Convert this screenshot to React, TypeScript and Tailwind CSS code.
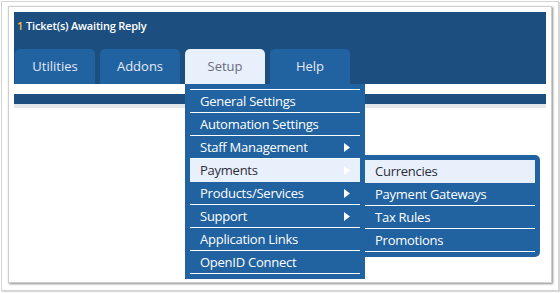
import React from "react";

const menuItems: { label: string; arrow?: boolean; active?: boolean }[] = [
  { label: "General Settings" },
  { label: "Automation Settings" },
  { label: "Staff Management", arrow: true },
  { label: "Payments", arrow: true, active: true },
  { label: "Products/Services", arrow: true },
  { label: "Support", arrow: true },
  { label: "Application Links" },
  { label: "OpenID Connect" },
];

const subItems: { label: string; active?: boolean }[] = [
  { label: "Currencies", active: true },
  { label: "Payment Gateways" },
  { label: "Tax Rules" },
  { label: "Promotions" },
];

const tabs = ["Utilities", "Addons", "Setup", "Help"];

function Arrow() {
  return (
    <svg width="6" height="9" viewBox="0 0 6 9" className="shrink-0">
      <polygon points="0,0 6,4.5 0,9" fill="#ffffff" />
    </svg>
  );
}

export default function App() {
  return (
    <div
      className="relative w-[560px] h-[293px] bg-white overflow-hidden"
      style={{ fontFamily: '"Open Sans", "Noto Sans", sans-serif' }}
    >
      <div className="absolute left-[1px] top-[1px] w-[558px] h-[290px] border border-[#d4d4d4] shadow-[1px_1px_1px_rgba(0,0,0,0.15)]" />
      <div className="absolute left-[8px] top-[6px] w-[544px] h-[277px] border border-[#cfcfcf] bg-white shadow-[1px_1px_2px_rgba(0,0,0,0.45)] p-[5px]">
        {/* header */}
        <div className="bg-[#1c4f80] h-[72px] flex flex-col">
          <div className="h-[29px] flex items-center pl-[3px] text-[11px] font-semibold tracking-[-0.2px] text-white">
            <span className="text-[#f3c33e] mr-[3px]">1</span>
            <span>Ticket(s) Awaiting Reply</span>
          </div>
          <div className="flex gap-[5px] pl-[1px] h-[35px] mt-[8px]">
            {tabs.map((t) => (
              <div
                key={t}
                className={
                  t === "Setup"
                    ? "w-[80px] h-[35px] rounded-t-[5px] bg-[#e8f0fb] text-[#6b6b7e] text-[13px] flex items-center justify-center"
                    : "w-[80px] h-[35px] rounded-t-[5px] bg-[#2162a1] text-[#e3eaf6] text-[13px] flex items-center justify-center"
                }
              >
                {t}
              </div>
            ))}
          </div>
        </div>
        <div className="h-[10px]" />
        <div className="h-[10px] bg-[#1c4f80]" />
        <div className="h-[4px] bg-[#e3e7ea]" />
      </div>

      {/* dropdown */}
      <div className="absolute left-[185px] top-[84px] w-[180px] bg-[#2162a1] p-[5px]">
        <div className="border-t border-white">
          {menuItems.map((m) => (
            <div
              key={m.label}
              className={
                m.active
                  ? "h-[23px] border-b border-[#e8f0fb] bg-[#e8f0fb] text-[#2d2d3a] flex items-center justify-between pl-[10px] pr-[10px] text-[13px] tracking-[-0.25px]"
                  : "h-[23px] border-b border-white text-white flex items-center justify-between pl-[10px] pr-[10px] text-[13px] tracking-[-0.25px]"
              }
            >
              <span className="leading-none">{m.label}</span>
              {m.arrow ? <Arrow /> : null}
            </div>
          ))}
        </div>
      </div>

      {/* submenu */}
      <div className="absolute left-[365px] top-[155px] w-[175px] bg-[#2162a1] pt-[5px] pr-[5px] pb-[5px] rounded-r-[5px]">
        {subItems.map((s) => (
          <div
            key={s.label}
            className={
              s.active
                ? "h-[23px] border-b border-[#e8f0fb] bg-[#e8f0fb] text-[#2d2d3a] flex items-center pl-[10px] text-[13px] tracking-[-0.25px]"
                : "h-[23px] border-b border-white text-white flex items-center pl-[10px] text-[13px] tracking-[-0.25px]"
            }
          >
            <span className="leading-none">{s.label}</span>
          </div>
        ))}
      </div>
    </div>
  );
}
